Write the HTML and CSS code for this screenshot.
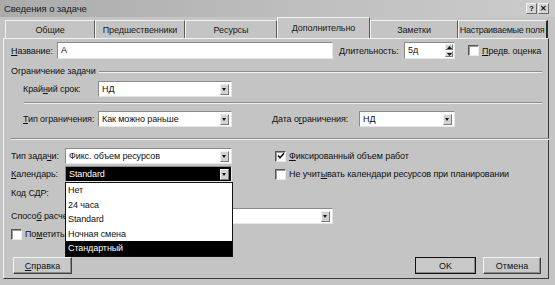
FILE: index.html
```html
<!DOCTYPE html>
<html lang="ru">
<head>
    <meta charset="UTF-8">
    <title>Сведения о задаче</title>
    <link rel="stylesheet" href="styles.css">
</head>
<body>
<div class="dialog">
    <div class="titlebar">
        <span class="title">Сведения о задаче</span>
        <div class="tb-buttons">
            <span class="tb-btn">?</span>
            <span class="tb-btn">&#x2715;</span>
        </div>
    </div>

    <div class="tabs">
        <div class="tab w90">Общие</div>
        <div class="tab w90">Предшественники</div>
        <div class="tab w92">Ресурсы</div>
        <div class="tab w93 active">Дополнительно</div>
        <div class="tab w88">Заметки</div>
        <div class="tab w90 last">Настраиваемые поля</div>
    </div>

    <div class="panel">
        <!-- name / duration -->
        <div class="row r-name">
            <label class="lbl l-name"><u>Н</u>азвание:</label>
            <div class="field f-name">A</div>
            <label class="lbl l-dur"><u>Д</u>лительность:</label>
            <div class="field spin">
                <span class="val">5д</span>
                <span class="spin-btns">
                    <span class="sbtn"><svg width="5" height="3" viewBox="0 0 5 3"><path d="M0 3 L2.5 0 L5 3 Z" fill="#111"/></svg></span>
                    <span class="sbtn"><svg width="5" height="3" viewBox="0 0 5 3"><path d="M0 0 L2.5 3 L5 0 Z" fill="#111"/></svg></span>
                </span>
            </div>
            <span class="check c-est"></span>
            <span class="check-text"><u>П</u>редв. оценка</span>
        </div>

        <!-- constraint group -->
        <div class="group-head">
            <span>Ограничение задачи</span>
            <span class="etch"></span>
        </div>
        <div class="row r-deadline">
            <label class="lbl l-indent">Край<u>н</u>ий срок:</label>
            <div class="combo c-134"><span class="val">НД</span><span class="arrow"></span></div>
        </div>
        <div class="etch sep-inner"></div>
        <div class="row r-ctype">
            <label class="lbl l-indent"><u>Т</u>ип ограничения:</label>
            <div class="combo c-134"><span class="val">Как можно раньше</span><span class="arrow"></span></div>
            <label class="lbl l-cdate">Дата о<u>г</u>раничения:</label>
            <div class="combo c-96"><span class="val">НД</span><span class="arrow"></span></div>
        </div>
        <div class="etch sep-full"></div>

        <!-- task type / calendar -->
        <div class="row r-type">
            <label class="lbl l-short">Тип зада<u>ч</u>и:</label>
            <div class="combo c-167"><span class="val">Фикс. объем ресурсов</span><span class="arrow"></span></div>
            <span class="check c-right"><svg width="8" height="8" viewBox="0 0 8 8"><path d="M1 3.5 L3 5.8 L7 1.2" fill="none" stroke="#111" stroke-width="1.6"/></svg></span>
            <span class="check-text"><u>Ф</u>иксированный объем работ</span>
        </div>
        <div class="row r-cal">
            <label class="lbl l-short"><u>К</u>алендарь:</label>
            <div class="combo c-167 selected"><span class="val">Standard</span><span class="arrow"></span></div>
            <span class="check c-right"></span>
            <span class="check-text">Не учит<u>ы</u>вать календари ресурсов при планировании</span>
        </div>
        <div class="row r-wbs">
            <label class="lbl l-short">Код С<u>Д</u>Р:</label>
            <div class="field f-wbs"></div>
        </div>
        <div class="row r-ev">
            <label class="lbl l-ev">Спосо<u>б</u> расчета:</label>
            <div class="combo c-ev"><span class="arrow"></span></div>
        </div>
        <div class="row r-mile">
            <span class="check"></span>
            <span class="check-text">По<u>м</u>етить веху</span>
        </div>

        <div class="row r-buttons">
            <button class="btn b-help"><u>С</u>правка</button>
            <button class="btn b-ok">OK</button>
            <button class="btn b-cancel">Отмена</button>
        </div>

        <!-- open list for the calendar field -->
        <ul class="dropdown">
            <li>Нет</li>
            <li>24 часа</li>
            <li>Standard</li>
            <li>Ночная смена</li>
            <li class="hl">Стандартный</li>
        </ul>
    </div>
</div>
</body>
</html>
```

FILE: styles.css
```css
/* Task information dialog, classic look */
* { box-sizing: border-box; }
body { margin: 0; background: #c4c4c4; font-family: "Liberation Sans", Arial, sans-serif; font-size: 9px; letter-spacing: -0.1px; color: #111; }
u { text-decoration: underline; text-underline-offset: 1px; }

.dialog { width: 555px; height: 285px; background: #c4c4c4; padding: 0 6px 0 3px; }

.titlebar { height: 17px; margin: 0 -6px 0 -3px; padding: 0 6px 0 4px; display: flex; align-items: center; background: linear-gradient(to right, #ababab, #c0c0c0 60%, #cbcbcb); }
.title { font-size: 9.5px; color: #1a1a1a; flex: 1; }
.tb-buttons { display: flex; gap: 1px; }
.tb-btn { width: 11px; height: 11px; display: flex; align-items: center; justify-content: center; background: #d6d6d6; border: 1px solid; border-color: #f4f4f4 #6a6a6a #6a6a6a #f4f4f4; font-weight: bold; font-size: 8px; color: #111; }

.tabs { height: 21px; display: flex; align-items: flex-end; padding-left: 2px; }
.tab { height: 18px; display: flex; align-items: center; justify-content: center; white-space: nowrap; border-top: 1px solid #f2f2f2; border-left: 1px solid #f2f2f2; border-right: 1px solid #5a5a5a; background: #c4c4c4; color: #1a1a1a; }
.tab.active { height: 22px; margin-bottom: -1px; background: #c6c6c6; position: relative; padding-bottom: 2px; }
.tab.last { border-right: 2px solid #2a2a2a; letter-spacing: -0.3px; padding-right: 1px; }
.w88 { width: 88px; }
.w90 { width: 90px; }
.w92 { width: 92px; }
.w93 { width: 93px; }

.panel { position: relative; height: 241px; border: 1px solid; border-color: #f2f2f2 #3a3a3a #3a3a3a #f2f2f2; padding: 0 6px 0 7px; display: flex; flex-direction: column; }

.row { display: flex; align-items: center; flex-shrink: 0; }
.lbl { flex-shrink: 0; white-space: nowrap; }

.field { background: #fff; height: 17px; border: 1px solid; border-color: #8a8a8a #e6e6e6 #e6e6e6 #8a8a8a; padding-left: 3px; line-height: 15px; }
.combo { background: #fff; height: 16px; border: 1px solid; border-color: #8a8a8a #e6e6e6 #e6e6e6 #8a8a8a; display: flex; align-items: center; justify-content: flex-end; }
.combo .val { flex: 1; padding-left: 3px; white-space: nowrap; overflow: hidden; }
.combo .arrow { width: 9px; height: 11px; margin-right: 2px; background: #d2d2d2; border: 1px solid; border-color: #f0f0f0 #7a7a7a #7a7a7a #f0f0f0; position: relative; }
.combo .arrow::after { content: ""; position: absolute; left: 1px; top: 3px; border-left: 2.5px solid transparent; border-right: 2.5px solid transparent; border-top: 3px solid #111; }
.combo.selected { background: #000; color: #fff; }

.spin { display: flex; align-items: center; padding-right: 1px; }
.spin .val { flex: 1; }
.spin-btns { display: flex; flex-direction: column; gap: 1px; }
.sbtn { width: 8px; height: 6px; display: flex; align-items: center; justify-content: center; background: #d2d2d2; border: 1px solid; border-color: #f0f0f0 #7a7a7a #7a7a7a #f0f0f0; }

.check { width: 11px; height: 11px; flex-shrink: 0; background: #fff; border: 1px solid; border-color: #555 #e8e8e8 #e8e8e8 #555; box-shadow: inset 1px 1px 0 #9a9a9a; display: flex; align-items: center; justify-content: center; }
.check-text { margin-left: 3px; white-space: nowrap; }

.etch { height: 2px; border-top: 1px solid #8c8c8c; border-bottom: 1px solid #f0f0f0; }

/* row 1 */
.r-name { margin-top: 3px; height: 17px; }
.l-name { width: 46px; }
.f-name { width: 276px; }
.l-dur { width: 65px; margin-left: 6px; }
.spin { width: 51px; }
.c-est { margin-left: 13px; }

/* constraint group */
.group-head { margin-top: 6px; height: 12px; display: flex; align-items: center; }
.group-head .etch { flex: 1; margin-left: 3px; margin-top: 1px; }
.r-deadline { margin-top: 4px; height: 16px; }
.l-indent { width: 75px; margin-left: 12px; }
.c-134 { width: 134px; }
.sep-inner { margin: 5px 0 0 13px; }
.r-ctype { margin-top: 7px; height: 16px; }
.l-cdate { width: 87px; margin-left: 40px; }
.c-96 { width: 96px; }
.sep-full { margin: 11px -7px 0 0; }

/* task type block */
.r-type { margin-top: 8px; height: 16px; }
.l-short { width: 54px; }
.c-167 { width: 167px; }
.c-right { margin-left: 43px; }
.r-cal { margin-top: 2px; height: 16px; }
.r-wbs { margin-top: 3px; height: 16px; }
.f-wbs { width: 167px; height: 16px; }
.r-ev { margin-top: 7px; height: 16px; width: 322px; }
.l-ev { width: 60px; }
.c-ev { flex: 1; }
.r-mile { margin-top: 3px; height: 14px; }

/* buttons */
.r-buttons { margin-top: 16px; height: 17px; }
.btn { height: 17px; padding: 0; font: inherit; color: #111; background: #c8c8c8; border: 1px solid; border-color: #f4f4f4 #404040 #404040 #f4f4f4; box-shadow: inset -1px -1px 0 #8a8a8a; }
.b-help { width: 59px; margin-left: 2px; }
.b-ok { width: 61px; margin-left: auto; outline: 1px solid #111; outline-offset: -1px; }
.b-cancel { width: 58px; margin-left: 7px; margin-right: 1px; }

/* open list for calendar */
.dropdown { position: absolute; left: 61px; top: 143px; width: 168px; margin: 0; padding: 0; list-style: none; background: #fff; border: 1px solid #111; }
.dropdown li { height: 14.5px; line-height: 14.5px; padding-left: 2px; }
.dropdown li.hl { background: #000; color: #fff; }
```
